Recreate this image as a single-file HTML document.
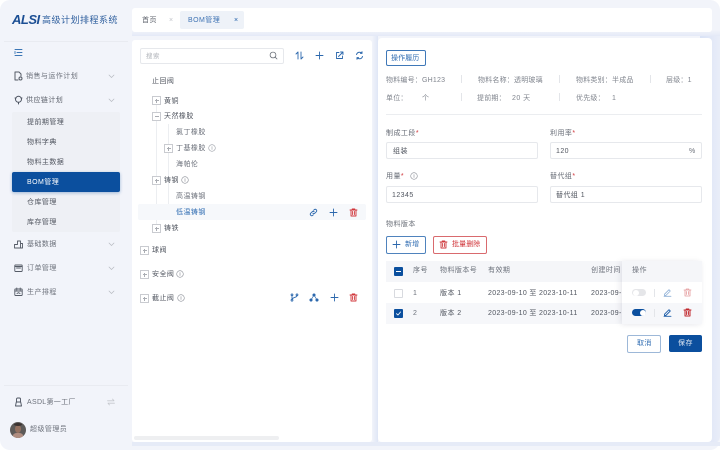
<!DOCTYPE html>
<html lang="zh"><head><meta charset="utf-8"><style>
html,body{margin:0;padding:0;width:727px;height:460px;overflow:hidden;background:#fff}
body{position:relative;font-family:"Liberation Sans","Noto Sans CJK SC",sans-serif}
.a{position:absolute}
.t{position:absolute;font-size:7px;line-height:10px;height:10px;white-space:nowrap;letter-spacing:.45px;color:#50555f;margin-top:1px}
.g{color:#6c717b}.b{color:#1f5ea8}.r{color:#d0353a}
.k{color:#80858e}
svg{position:absolute;fill:none;stroke-linecap:round;stroke-linejoin:round}
.box{position:absolute;width:7px;height:7px;border:1px solid #c9cbd0;background:#fff}
.box:before{content:"";position:absolute;left:1.5px;right:1.5px;top:3px;height:1px;background:#aaadb3}
.box.p:after{content:"";position:absolute;top:1.5px;bottom:1.5px;left:3px;width:1px;background:#aaadb3}
.inp{position:absolute;height:15px;border:1px solid #e6e8ec;border-radius:2px;background:#fff;width:150px}
.sep{position:absolute;width:1px;height:8px;background:#e3e5e9}
.vl{position:absolute;width:1px;background:#eceef1}
</style></head><body>
<div class="a" style="left:0;top:0;width:720px;height:450px;background:#f2f4fa;border-radius:10px"></div>
<div class="a" style="left:700px;top:30px;width:20px;height:414px;background:linear-gradient(90deg,#d9e2f6,#e9edf8);border-radius:0 0 8px 0"></div>
<div class="a" style="left:372px;top:36px;width:6px;height:408px;background:linear-gradient(90deg,#f2f4fa,#dfe6f6)"></div>
<div class="a" style="left:132px;top:30px;width:588px;height:6px;background:linear-gradient(180deg,#f2f4fa,#e4e9f7)"></div>
<div class="a" style="left:132px;top:442px;width:588px;height:4px;background:#e6ebf7"></div>

<!-- Logo -->
<div class="a" style="left:12px;top:12px;font:italic 900 13px/16px 'Liberation Sans',sans-serif;color:#1c4f94;letter-spacing:-.5px">ALSI</div>
<div class="t" style="left:42px;top:13px;font-size:9px;line-height:12px;height:12px;color:#2f5f9e;letter-spacing:.5px">高级计划排程系统</div>
<div class="a" style="left:4px;top:40.5px;width:124px;height:1px;background:#e9ebf1"></div>
<svg style="left:14px;top:48px" width="9" height="9" viewBox="0 0 9 9" stroke="#3c76b5" stroke-width=".9"><path d="M1 1.500h7M3 4.500h5M1 7.500h7M1 3.400v2.200"/></svg>

<!-- Sidebar -->
<svg style="left:14px;top:71px" width="9" height="10" viewBox="0 0 9 10" stroke="#555b66" stroke-width="1"><path d="M1 9V1h4l2 2v2M1 9h3"/><circle cx="6.500" cy="7.500" r="1.500"/></svg>
<div class="t g" style="left:26px;top:71px">销售与运作计划</div>
<svg style="left:108px;top:74px" width="7" height="5" viewBox="0 0 7 5" stroke="#b5b8bf" stroke-width=".7"><path d="M1 1l2.500 2.500L6 1"/></svg>
<svg style="left:14px;top:95px" width="9" height="10" viewBox="0 0 9 10" stroke="#4c5360" stroke-width="1"><circle cx="4.500" cy="4.300" r="3"/><path d="M1 3h1M7 3h1M4.500 7.500v1.500"/></svg>
<div class="t g" style="left:26px;top:95px;color:#5c616b">供应链计划</div>
<svg style="left:108px;top:98px" width="7" height="5" viewBox="0 0 7 5" stroke="#b5b8bf" stroke-width=".7"><path d="M1 1l2.500 2.500L6 1"/></svg>
<div class="a" style="left:12px;top:112px;width:108px;height:120px;background:#eef0f5;border-radius:2px"></div>
<div class="t" style="left:27px;top:117px">提前期管理</div>
<div class="t" style="left:27px;top:137px">物料字典</div>
<div class="t" style="left:27px;top:157px">物料主数据</div>
<div class="a" style="left:12px;top:172px;width:108px;height:20px;background:#0b4f9e;border-radius:2px;box-shadow:0 1px 3px rgba(11,79,158,.35)"></div>
<div class="t" style="left:27px;top:177px;color:#fff">BOM管理</div>
<div class="t" style="left:27px;top:197px">仓库管理</div>
<div class="t" style="left:27px;top:217px">库存管理</div>
<svg style="left:14px;top:239px" width="9" height="10" viewBox="0 0 9 10" stroke="#555b66" stroke-width=".9"><path d="M.5 9V5.500h3V2h3v7M6.500 4.500h2V9H.5"/></svg>
<div class="t g" style="left:27px;top:239px">基础数据</div>
<svg style="left:108px;top:242px" width="7" height="5" viewBox="0 0 7 5" stroke="#b5b8bf" stroke-width=".7"><path d="M1 1l2.500 2.500L6 1"/></svg>
<svg style="left:14px;top:263px" width="9" height="10" viewBox="0 0 9 10" stroke="#555b66" stroke-width=".9"><rect x=".8" y="2" width="7.400" height="6.500" rx=".6"/><path d="M2.500 5h4M.8 3.500h7.400"/></svg>
<div class="t g" style="left:27px;top:263px">订单管理</div>
<svg style="left:108px;top:266px" width="7" height="5" viewBox="0 0 7 5" stroke="#b5b8bf" stroke-width=".7"><path d="M1 1l2.500 2.500L6 1"/></svg>
<svg style="left:14px;top:287px" width="9" height="10" viewBox="0 0 9 10" stroke="#555b66" stroke-width=".9"><rect x=".8" y="2" width="7.400" height="6.500" rx=".6"/><path d="M2.800 1v2M6.200 1v2M.8 4h7.400M3 6.500l1.500-.8 1.500.8"/></svg>
<div class="t g" style="left:27px;top:287px">生产排程</div>
<svg style="left:108px;top:290px" width="7" height="5" viewBox="0 0 7 5" stroke="#b5b8bf" stroke-width=".7"><path d="M1 1l2.500 2.500L6 1"/></svg>
<div class="a" style="left:4px;top:385px;width:124px;height:1px;background:#e9ebf1"></div>
<svg style="left:14px;top:397px" width="9" height="10" viewBox="0 0 9 10" stroke="#4c5360" stroke-width=".9"><path d="M2.500 5V2.200c0-.7.500-1.200 1.100-1.200h1.800c.6 0 1.100.5 1.100 1.200V5M1.500 9l.8-4h4.400l.8 4z"/></svg>
<div class="t g" style="left:27px;top:397px;letter-spacing:.3px">ASDL第一工厂</div>
<svg style="left:107px;top:398px" width="8" height="8" viewBox="0 0 8 8" stroke="#c5c8cd" stroke-width=".8"><path d="M.5 2.800h6.500L5.500 1M7.500 5.200H1L2.500 7"/></svg>
<div class="a" style="left:10px;top:422px;width:16px;height:16px;border-radius:50%;overflow:hidden;background:#5d5a58"><div class="a" style="left:5px;top:3px;width:6px;height:8px;border-radius:50%;background:#94705f"></div><div class="a" style="left:3px;top:11px;width:10px;height:6px;border-radius:40%;background:#b08d80"></div><div class="a" style="left:4px;top:1px;width:8px;height:3px;border-radius:50%;background:#3a3230"></div></div>
<div class="t g" style="left:30px;top:424px">超级管理员</div>

<!-- Tabs -->
<div class="a" style="left:132px;top:8px;width:580px;height:24px;background:#fff;border-radius:3px"></div>
<div class="t" style="left:142px;top:15px;color:#5c616b">首页</div>
<div class="t" style="left:169px;top:15px;color:#c0c3c9;font-size:7px">×</div>
<div class="a" style="left:180px;top:11px;width:64px;height:18px;background:#eef2f8;border-radius:2px"></div>
<div class="t b" style="left:188px;top:15px;color:#3f73b3">BOM管理</div>
<div class="t b" style="left:234px;top:15px;color:#1f5ea8;font-size:7px">×</div>

<!-- Tree panel -->
<div class="a" style="left:132px;top:40px;width:240px;height:402px;background:#fff;border-radius:3px"></div>
<div class="a" style="left:140px;top:48px;width:142px;height:14px;border:1px solid #e6e8ec;border-radius:2px"></div>
<div class="t" style="left:146px;top:51px;color:#b2b5bb;font-size:6.500px">搜索</div>
<svg style="left:269px;top:51px" width="9" height="9" viewBox="0 0 9 9" stroke="#6a6f78" stroke-width=".8"><circle cx="4" cy="4" r="2.900"/><path d="M6.200 6.200L8 8"/></svg>
<svg style="left:295px;top:51px" width="9" height="9" viewBox="0 0 9 9" stroke="#2c68ad" stroke-width=".9"><path d="M3 8V1L1 3M6 1v7l2-2"/></svg>
<svg style="left:315px;top:51px" width="9" height="9" viewBox="0 0 9 9" stroke="#2c68ad" stroke-width=".9"><path d="M4.500 1v7M1 4.500h7"/></svg>
<svg style="left:335px;top:51px" width="9" height="9" viewBox="0 0 9 9" stroke="#2c68ad" stroke-width=".9"><path d="M4 1.500H1.500v6h6V5M3.500 5.500L8 1M5.500 1H8v2.500"/></svg>
<svg style="left:355px;top:51px" width="9" height="9" viewBox="0 0 9 9" stroke="#2c68ad" stroke-width="1"><path d="M1.500 3.500c.5-1.500 1.500-2.300 3-2.300 1 0 1.800.3 2.500 1M7.500 5.500c-.5 1.500-1.500 2.300-3 2.300-1 0-1.800-.3-2.500-1M7 .8v1.600H5.500M2 8.200V6.600h1.500"/></svg>

<div class="t" style="left:152px;top:76px">止回阀</div>
<div class="vl" style="left:156px;top:104px;height:124px"></div>
<div class="vl" style="left:168px;top:124px;height:96px"></div>
<div class="box p" style="left:152px;top:96px"></div>
<div class="t" style="left:164px;top:96px">黄铜</div>
<div class="box" style="left:152px;top:112px"></div>
<div class="t" style="left:164px;top:111px">天然橡胶</div>
<div class="t g" style="left:176px;top:127px">氯丁橡胶</div>
<div class="box p" style="left:164px;top:144px"></div>
<div class="t g" style="left:176px;top:143px">丁基橡胶</div>
<svg style="left:208px;top:144px" width="8" height="8" viewBox="0 0 8 8" stroke="#9a9ea6" stroke-width=".6"><circle cx="4" cy="4" r="3.300"/><path d="M4 2.500v3"/></svg>
<div class="t g" style="left:176px;top:159px">海帕伦</div>
<div class="box p" style="left:152px;top:176px"></div>
<div class="t" style="left:164px;top:175px">铸钢</div>
<svg style="left:181px;top:176px" width="8" height="8" viewBox="0 0 8 8" stroke="#8a8e96" stroke-width=".6"><circle cx="4" cy="4" r="3.300"/><path d="M4 2.500v3"/></svg>
<div class="t g" style="left:176px;top:191px">高温铸钢</div>
<div class="a" style="left:138px;top:204px;width:228px;height:16px;background:#f6f8fb;border-radius:2px"></div>
<div class="t b" style="left:176px;top:207px;color:#2f6cb2">低温铸钢</div>
<svg style="left:309px;top:208px" width="9" height="9" viewBox="0 0 9 9" stroke="#2c68ad" stroke-width=".9"><path d="M3.800 5.200a1.500 1.500 0 0 0 2.100 0l1.500-1.500a1.500 1.500 0 0 0-2.100-2.100l-.6.600M5.200 3.800a1.500 1.500 0 0 0-2.100 0L1.600 5.300a1.500 1.500 0 0 0 2.100 2.100l.6-.6"/></svg>
<svg style="left:329px;top:208px" width="9" height="9" viewBox="0 0 9 9" stroke="#2c68ad" stroke-width=".9"><path d="M4.500 1v7M1 4.500h7"/></svg>
<svg style="left:349px;top:208px" width="9" height="9" viewBox="0 0 9 9" stroke="#d0353a" stroke-width=".9"><path d="M1 2h7M3.200 2V1h2.600v1M2 2v6h5V2M3.600 3.500v3M5.400 3.500v3"/></svg>
<div class="box p" style="left:152px;top:224px"></div>
<div class="t" style="left:164px;top:223px">铸铁</div>
<div class="box p" style="left:140px;top:246px"></div>
<div class="t" style="left:152px;top:245px">球阀</div>
<div class="box p" style="left:140px;top:270px"></div>
<div class="t" style="left:152px;top:269px">安全阀</div>
<svg style="left:176px;top:270px" width="8" height="8" viewBox="0 0 8 8" stroke="#8a8e96" stroke-width=".6"><circle cx="4" cy="4" r="3.300"/><path d="M4 2.500v3"/></svg>
<div class="box p" style="left:140px;top:294px"></div>
<div class="t" style="left:152px;top:293px">截止阀</div>
<svg style="left:177px;top:294px" width="8" height="8" viewBox="0 0 8 8" stroke="#8a8e96" stroke-width=".6"><circle cx="4" cy="4" r="3.300"/><path d="M4 2.500v3"/></svg>
<svg style="left:290px;top:293px" width="9" height="9" viewBox="0 0 9 9" stroke="#2c68ad" stroke-width=".9"><circle cx="2" cy="1.800" r=".9"/><circle cx="2" cy="7.200" r=".9"/><circle cx="7" cy="1.800" r=".9"/><path d="M2 2.700v3.600M7 2.700C7 4.500 3 4 2 6.300"/></svg>
<svg style="left:309px;top:293px" width="10" height="9" viewBox="0 0 10 9" fill="#2c68ad" stroke="#2c68ad" stroke-width=".7"><circle cx="5" cy="2" r="1.200" fill="#2c68ad"/><circle cx="2" cy="7" r="1.200" fill="#2c68ad"/><circle cx="8" cy="7" r="1.200" fill="#2c68ad"/><path d="M5 2L2 7M5 2l3 5"/></svg>
<svg style="left:330px;top:293px" width="9" height="9" viewBox="0 0 9 9" stroke="#2c68ad" stroke-width=".9"><path d="M4.500 1v7M1 4.500h7"/></svg>
<svg style="left:349px;top:293px" width="9" height="9" viewBox="0 0 9 9" stroke="#d0353a" stroke-width=".9"><path d="M1 2h7M3.200 2V1h2.600v1M2 2v6h5V2M3.600 3.500v3M5.400 3.500v3"/></svg>
<div class="a" style="left:134px;top:436px;width:145px;height:4px;background:#eeeff1;border-radius:2px"></div>

<!-- Detail panel -->
<div class="a" style="left:378px;top:38px;width:334px;height:404px;background:#fff;border-radius:4px"></div>
<div class="a" style="left:386px;top:50px;width:38px;height:14px;border:1px solid #3f78b8;border-radius:2px"></div>
<div class="t b" style="left:391px;top:53px;letter-spacing:.1px;color:#2f6cb2">操作履历</div>

<div class="t k" style="left:386px;top:75px;letter-spacing:.2px">物料编号：GH123</div>
<div class="sep" style="left:461px;top:75px"></div>
<div class="t k" style="left:478px;top:75px;letter-spacing:.2px">物料名称：透明玻璃</div>
<div class="sep" style="left:559px;top:75px"></div>
<div class="t k" style="left:576px;top:75px;letter-spacing:.2px">物料类别：半成品</div>
<div class="sep" style="left:650px;top:75px"></div>
<div class="t k" style="left:666px;top:75px;letter-spacing:.2px">层级：1</div>
<div class="t k" style="left:386px;top:93px;letter-spacing:.2px">单位：</div>
<div class="t k" style="left:422px;top:93px">个</div>
<div class="sep" style="left:461px;top:93px"></div>
<div class="t k" style="left:477px;top:93px;letter-spacing:.2px">提前期：</div>
<div class="t k" style="left:512px;top:93px">20 天</div>
<div class="sep" style="left:559px;top:93px"></div>
<div class="t k" style="left:576px;top:93px;letter-spacing:.2px">优先级：</div>
<div class="t k" style="left:612px;top:93px">1</div>
<div class="a" style="left:386px;top:114px;width:316px;height:1px;background:#ebedf0"></div>

<div class="t" style="left:386px;top:128px;color:#666b75">制成工段<span class="r">*</span></div>
<div class="t" style="left:550px;top:128px;color:#666b75">利用率<span class="r">*</span></div>
<div class="inp" style="left:386px;top:142px"></div>
<div class="t" style="left:393px;top:146px">组装</div>
<div class="inp" style="left:550px;top:142px"></div>
<div class="t" style="left:556px;top:146px">120</div>
<div class="t g" style="left:689px;top:146px">%</div>

<div class="t" style="left:386px;top:171px;color:#666b75">用量<span class="r">*</span></div>
<svg style="left:410px;top:172px" width="8" height="8" viewBox="0 0 8 8" stroke="#8a8e96" stroke-width=".6"><circle cx="4" cy="4" r="3.300"/><path d="M4 2.500v3"/></svg>
<div class="t" style="left:550px;top:171px;color:#666b75">替代组<span class="r">*</span></div>
<div class="inp" style="left:386px;top:186px"></div>
<div class="t" style="left:392px;top:190px">12345</div>
<div class="inp" style="left:550px;top:186px"></div>
<div class="t" style="left:556px;top:190px">替代组 1</div>

<div class="t" style="left:386px;top:219px;color:#6a6f78">物料版本</div>
<div class="a" style="left:386px;top:236px;width:38px;height:16px;border:1px solid #4f83bd;border-radius:2px"></div>
<svg style="left:392px;top:240px" width="9" height="9" viewBox="0 0 9 9" stroke="#2c68ad" stroke-width=".9"><path d="M4.500 1v7M1 4.500h7"/></svg>
<div class="t b" style="left:405px;top:239px;letter-spacing:.1px;color:#2f6cb2">新增</div>
<div class="a" style="left:433px;top:236px;width:52px;height:16px;border:1px solid #d96a6e;border-radius:2px"></div>
<svg style="left:439px;top:240px" width="9" height="9" viewBox="0 0 9 9" stroke="#cf3a3e" stroke-width=".9"><path d="M1 2h7M3.200 2V1h2.600v1M2 2v6h5V2M3.600 3.500v3M5.400 3.500v3"/></svg>
<div class="t r" style="left:452px;top:239px;letter-spacing:.1px">批量删除</div>

<!-- Table -->
<div class="a" style="left:386px;top:261px;width:236px;height:21px;background:#f5f6f9"></div>
<div class="a" style="left:386px;top:303px;width:236px;height:21px;background:#f6f7fa"></div>
<div class="a" style="left:394px;top:267px;width:9px;height:9px;background:#0b4f9e;border-radius:1px"></div>
<div class="a" style="left:396px;top:271px;width:5px;height:1px;background:#fff"></div>
<div class="t g" style="left:413px;top:265px">序号</div>
<div class="t g" style="left:440px;top:265px">物料版本号</div>
<div class="t g" style="left:488px;top:265px">有效期</div>
<div class="t g" style="left:591px;top:265px">创建时间</div>
<div class="a" style="left:394px;top:289px;width:7px;height:7px;border:1px solid #d8dadf;border-radius:1px"></div>
<div class="t g" style="left:413px;top:288px">1</div>
<div class="t" style="left:440px;top:288px">版本 1</div>
<div class="t" style="left:488px;top:288px;letter-spacing:.33px">2023-09-10 至 2023-10-11</div>
<div class="t" style="left:591px;top:288px;letter-spacing:.33px">2023-09-10</div>
<div class="a" style="left:394px;top:309px;width:9px;height:9px;background:#0b4f9e;border-radius:1px"></div>
<svg style="left:395px;top:310px" width="7" height="7" viewBox="0 0 7 7" stroke="#fff" stroke-width=".9"><path d="M1.500 3.700L3 5l2.500-3"/></svg>
<div class="t g" style="left:413px;top:308px">2</div>
<div class="t" style="left:440px;top:308px">版本 2</div>
<div class="t" style="left:488px;top:308px;letter-spacing:.33px">2023-09-10 至 2023-10-11</div>
<div class="t" style="left:591px;top:308px;letter-spacing:.33px">2023-09-10</div>

<div class="a" style="left:622px;top:261px;width:80px;height:63px;background:#fff;box-shadow:-3px 0 6px rgba(30,40,70,.06),0 1px 5px rgba(30,40,70,.05)"></div>
<div class="a" style="left:622px;top:261px;width:80px;height:21px;background:#f5f6f9"></div>
<div class="a" style="left:622px;top:303px;width:80px;height:21px;background:#f6f7fa"></div>
<div class="t g" style="left:632px;top:265px">操作</div>
<div class="a" style="left:632px;top:289px;width:14px;height:7px;background:#e5e6e9;border-radius:4px"></div>
<div class="a" style="left:632.500px;top:289.500px;width:6px;height:6px;background:#fff;border-radius:50%"></div>
<div class="sep" style="left:654px;top:289px"></div>
<svg style="left:663px;top:288px" width="9" height="9" viewBox="0 0 9 9" stroke="#8fb0d6" stroke-width=".8"><path d="M1.500 6.200L6 1.700l1.300 1.300-4.500 4.500H1.500zM1 8.300h7"/></svg>
<svg style="left:683px;top:288px" width="9" height="9" viewBox="0 0 9 9" stroke="#e49a9c" stroke-width=".8"><path d="M1 2h7M3.200 2V1h2.600v1M2 2v6h5V2M3.600 3.500v3M5.400 3.500v3"/></svg>
<div class="a" style="left:632px;top:309px;width:14px;height:7px;background:#0b4f9e;border-radius:4px"></div>
<div class="a" style="left:639.500px;top:309.500px;width:6px;height:6px;background:#fff;border-radius:50%"></div>
<div class="sep" style="left:654px;top:309px"></div>
<svg style="left:663px;top:308px" width="9" height="9" viewBox="0 0 9 9" stroke="#1f5ea8" stroke-width=".9"><path d="M1.500 6.200L6 1.700l1.300 1.300-4.500 4.500H1.500zM1 8.300h7"/></svg>
<svg style="left:683px;top:308px" width="9" height="9" viewBox="0 0 9 9" stroke="#c0262b" stroke-width="1"><path d="M1 2h7M3.200 2V1h2.600v1M2 2v6h5V2M3.600 3.500v3M5.400 3.500v3"/></svg>

<div class="a" style="left:627px;top:335px;width:32px;height:16px;border:1px solid #9db8d8;border-radius:2px"></div>
<div class="t b" style="left:637px;top:338px;letter-spacing:.4px;color:#2f6cb2">取消</div>
<div class="a" style="left:669px;top:335px;width:33px;height:17px;background:#0b4f9e;border-radius:2px"></div>
<div class="t" style="left:678px;top:338px;color:#e6edf6">保存</div>
</body></html>
